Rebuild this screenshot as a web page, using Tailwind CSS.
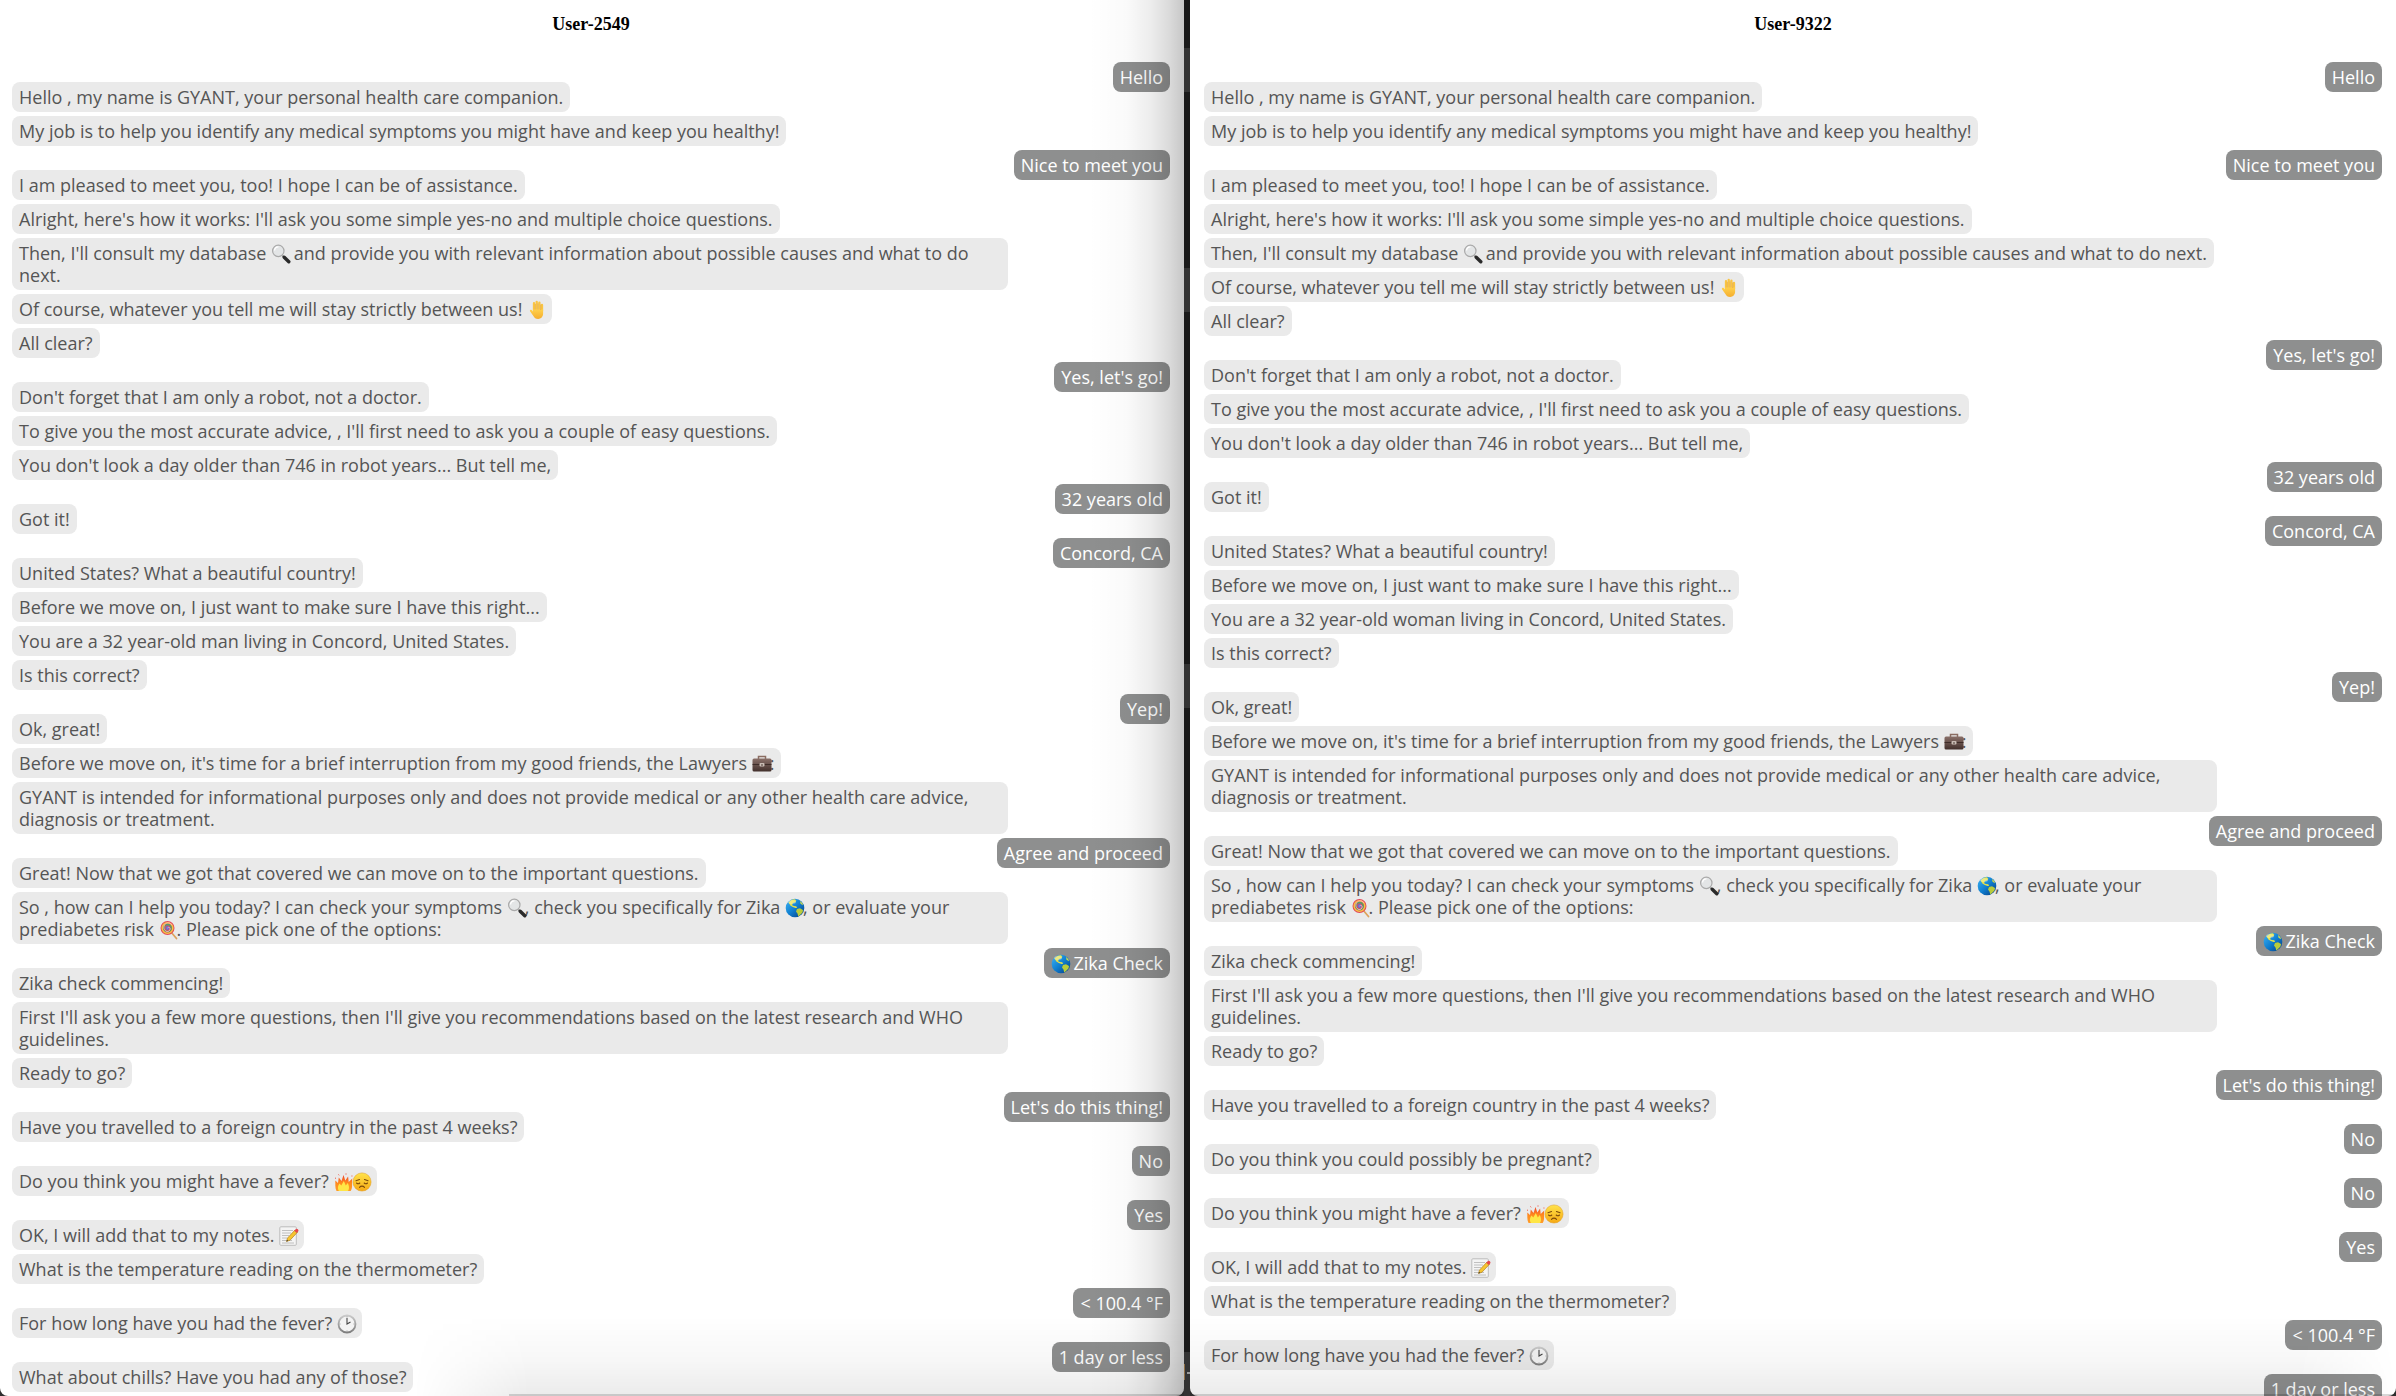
<!DOCTYPE html>
<html lang="en">
<head>
<meta charset="utf-8">
<title>GYANT conversations</title>
<script src="https://cdn.jsdelivr.net/npm/@tailwindcss/browser@4"></script>
</head>
<body class="bg-[#2e2e2e]">
<svg class="absolute size-0" aria-hidden="true">
  <defs>
    <linearGradient id="gGlobe" x1="0" y1="0" x2="1" y2="1"><stop offset="0" stop-color="#3fb4f5"/><stop offset=".5" stop-color="#0f7fd0"/><stop offset="1" stop-color="#063a80"/></linearGradient>
    <linearGradient id="gHand" x1="0" y1="0" x2="0" y2="1"><stop offset="0" stop-color="#ffd04c"/><stop offset="1" stop-color="#f5ae2e"/></linearGradient>
    <linearGradient id="gCase" x1="0" y1="0" x2="0" y2="1"><stop offset="0" stop-color="#8a7069"/><stop offset="1" stop-color="#42302c"/></linearGradient>
    <linearGradient id="gFire" x1="0" y1="0" x2="0" y2="1"><stop offset="0" stop-color="#f0452a"/><stop offset=".5" stop-color="#ff8a1e"/><stop offset="1" stop-color="#ff9d28"/></linearGradient>
    <linearGradient id="gFace" x1="0" y1="0" x2="0" y2="1"><stop offset="0" stop-color="#ffe34a"/><stop offset="1" stop-color="#f6a914"/></linearGradient>
    <linearGradient id="gClock" x1="0" y1="0" x2="0" y2="1"><stop offset="0" stop-color="#c9c9c9"/><stop offset="1" stop-color="#7f7f7f"/></linearGradient>
  </defs>
  <symbol id="lens" viewBox="0 0 20 20">
    <path d="M11.5 11.5l2.2 2.2" stroke="#777" stroke-width="1.6"/>
    <path d="M13.2 13.2l4.6 4.6" stroke="#2a2a2a" stroke-width="3.4" stroke-linecap="round"/>
    <circle cx="7.3" cy="6.9" r="5.7" fill="#e3e5e6" stroke="#a9a9a9" stroke-width="1.2"/>
    <path d="M3.5 6.5a4 4 0 0 1 4-3.6" fill="none" stroke="#fff" stroke-width="1.4"/>
  </symbol>
  <symbol id="hand" viewBox="0 0 20 20">
    <path d="M7 11V3.2M9.7 10V1.8M12.4 10V2.6M15 11V5" stroke="#f9c443" stroke-width="2.3" stroke-linecap="round"/>
    <path d="M5.9 9.5h10.2v4c0 3.2-2 5.4-5 5.4-2.400 0-3.700-1-4.700-3L3 11.200c-.6-1.300 1-2 1.900-1l1.300 1.600z" fill="url(#gHand)"/>
    <path d="M8.350 4v5.500M11.050 3.500v6M13.700 4.500v5.500" stroke="#dd9526" stroke-width=".5"/>
  </symbol>
  <symbol id="globe" viewBox="0 0 20 20">
    <circle cx="10" cy="10" r="9.300" fill="url(#gGlobe)"/>
    <path d="M3.500 4.500C5 2.300 7.500 1 10 1.200l1.300 1.500-1 1.700-2.400.6-.8 2.200 1.700.8 2.400.3 1 1.500-1.500.3-2.900-1.100-2.400-1.400z" fill="#e3e04c"/>
    <path d="M12 11l3-.7 3 1.600-.5 2.600-2.500 2.500-1.800 1.600-.6-2.800-1.600-2.200z" fill="#b9cc3b"/>
    <path d="M15 3l2.300 2 .7 2.300-2.500-1.500z" fill="#cfd94b"/>
    <ellipse cx="7" cy="4" rx="4" ry="2" fill="#fff" opacity=".3"/>
  </symbol>
  <symbol id="case" viewBox="0 0 20 20">
    <path d="M6.500 5V2.500h7V5" fill="none" stroke="#8b6d62" stroke-width="1.500"/>
    <rect x=".5" y="4.500" width="19" height="13" rx="1.500" fill="url(#gCase)"/>
    <path d="M.5 10.500h19" stroke="#33231f" stroke-width=".8"/>
    <rect x="7.500" y="9" width="5" height="3.500" rx="1" fill="#c9bdb5"/>
    <path d="M9 11h2" stroke="#4c3b35"/>
  </symbol>
  <symbol id="lolly" viewBox="0 0 20 20">
    <path d="M12 12l5.500 6.500" stroke="#dda35e" stroke-width="1.800" stroke-linecap="round"/>
    <circle cx="8.500" cy="8" r="7" fill="#e4475a"/>
    <circle cx="8.500" cy="8" r="5.300" fill="none" stroke="#f5c542" stroke-width="1.500"/>
    <circle cx="8.500" cy="8" r="3.600" fill="none" stroke="#4aa56a" stroke-width="1.500"/>
    <circle cx="8.500" cy="8" r="2" fill="#6a70d0"/>
    <path d="M8.500 8c2-2 4 1 1.500 3S4 9.500 5 6s6-4.500 8-1" fill="none" stroke="#ffb1b8" stroke-width=".9"/>
  </symbol>
  <symbol id="fire" viewBox="0 0 20 20">
    <path d="M2.500 19C.8 15.500 1.500 12 1.300 8.500L4 11l.8-5.500 2.700 3.600L9.500 3l1.800 5.500 2.800-4 .6 5.500 3.600-3.500c-1 4 1 8.500-1.600 12.500z" fill="url(#gFire)"/>
    <path d="M5 19c-2-3-.8-5.500.5-7.500l1.800 2L9.800 9l2 4.500 2-2.500c1.200 2.500 2 5.500.2 8z" fill="#ffe646"/>
    <path d="M1 6.200h.9M4.500 2.500l.6.800M12 1.500v1M17.500 4h.9" stroke="#ee4636" stroke-width="1"/>
  </symbol>
  <symbol id="sad" viewBox="0 0 20 20">
    <circle cx="10" cy="10" r="9.100" fill="url(#gFace)" stroke="#e09a1a" stroke-width=".5"/>
    <path d="M4 8.700l3.500-1.200M16 8.700l-3.500-1.200M4.500 11c1 .8 2.400.8 3.300 0M12.200 11c1 .8 2.400.8 3.300 0M7.500 15.300c1.400-1.600 3.600-1.600 5 0" fill="none" stroke="#7b4a0b" stroke-width="1.100" stroke-linecap="round"/>
  </symbol>
  <symbol id="memo" viewBox="0 0 20 20">
    <rect x=".8" y=".8" width="16.500" height="18.500" rx="1" fill="#f4f4f4" stroke="#bdbdbd"/>
    <path d="M3 4.500h11M3 7h9M3 9.500h7M3 12h5M3 14.500h10M3 17h12" stroke="#b3b3b3" stroke-width=".8"/>
    <path d="M7.500 15.500l1-3.500L16 4l2.500 2.200-7.500 8z" fill="#f6c530" stroke="#a87412" stroke-width=".6"/>
    <path d="M15.200 4.800L17 3c1-.8 3.200 1 2.300 2.300l-1.600 1.800z" fill="#e5484d"/>
    <path d="M7.500 15.500l.5-1.700 1.200 1.200z" fill="#333"/>
  </symbol>
  <symbol id="clock" viewBox="0 0 20 20">
    <circle cx="10" cy="10" r="8.500" fill="#f3f3f3" stroke="url(#gClock)" stroke-width="1.800"/>
    <path d="M10 4v6l3.500-2" fill="none" stroke="#444" stroke-width="1.100"/>
    <path d="M10 2.500v1M10 16.500v1M2.500 10h1M16.500 10h1" stroke="#888" stroke-width=".8"/>
  </symbol>
</svg>

<main class="grid h-screen grid-cols-[1184fr_6px_1206fr] overflow-hidden font-['Open_Sans',sans-serif] text-[18px] leading-[22px] text-[#555]">

  <section class="relative overflow-hidden rounded-b-lg bg-white pr-[14px] pl-3 [&_svg]:relative [&_svg]:-mr-[2px] [&_svg]:inline-block [&_svg]:size-5 [&_svg]:align-[-4px] [&>div]:flex [&>div]:h-5 [&>div]:justify-end [&>div>span]:h-[30px] [&>div>span]:rounded-lg [&>div>span]:bg-[#8e8f8f] [&>div>span]:px-[7px] [&>div>span]:py-1 [&>div>span]:text-white [&>p]:mb-1 [&>p]:w-fit [&>p]:max-w-[86%] [&>p]:rounded-lg [&>p]:bg-[#eaeaea] [&>p]:px-[7px] [&>p]:py-1">
    <h1 class="h-[62px] pt-[13px] text-center font-['Liberation_Serif',serif] font-bold text-black">User-2549</h1>
    <div><span>Hello</span></div>
    <p>Hello , my name is GYANT, your personal health care companion.</p>
    <p>My job is to help you identify any medical symptoms you might have and keep you healthy!</p>
    <div><span>Nice to meet you</span></div>
    <p>I am pleased to meet you, too! I hope I can be of assistance.</p>
    <p>Alright, here's how it works: I'll ask you some simple yes-no and multiple choice questions.</p>
    <p>Then, I'll consult my database <svg><use href="#lens"/></svg> and provide you with relevant information about possible causes and what to do next.</p>
    <p>Of course, whatever you tell me will stay strictly between us! <svg><use href="#hand"/></svg></p>
    <p>All clear?</p>
    <div><span>Yes, let's go!</span></div>
    <p>Don't forget that I am only a robot, not a doctor.</p>
    <p>To give you the most accurate advice, , I'll first need to ask you a couple of easy questions.</p>
    <p>You don't look a day older than 746 in robot years... But tell me,</p>
    <div><span>32 years old</span></div>
    <p>Got it!</p>
    <div><span>Concord, CA</span></div>
    <p>United States? What a beautiful country!</p>
    <p>Before we move on, I just want to make sure I have this right...</p>
    <p>You are a 32 year-old man living in Concord, United States.</p>
    <p>Is this correct?</p>
    <div><span>Yep!</span></div>
    <p>Ok, great!</p>
    <p>Before we move on, it's time for a brief interruption from my good friends, the Lawyers <svg><use href="#case"/></svg>:</p>
    <p>GYANT is intended for informational purposes only and does not provide medical or any other health care advice, diagnosis or treatment.</p>
    <div><span>Agree and proceed</span></div>
    <p>Great! Now that we got that covered we can move on to the important questions.</p>
    <p>So , how can I help you today? I can check your symptoms <svg><use href="#lens"/></svg>, check you specifically for Zika <svg><use href="#globe"/></svg>, or evaluate your prediabetes risk <svg><use href="#lolly"/></svg>. Please pick one of the options:</p>
    <div><span><svg><use href="#globe"/></svg> Zika Check</span></div>
    <p>Zika check commencing!</p>
    <p>First I'll ask you a few more questions, then I'll give you recommendations based on the latest research and WHO guidelines.</p>
    <p>Ready to go?</p>
    <div><span>Let's do this thing!</span></div>
    <p>Have you travelled to a foreign country in the past 4 weeks?</p>
    <div><span>No</span></div>
    <p>Do you think you might have a fever? <svg><use href="#fire"/></svg><svg><use href="#sad"/></svg></p>
    <div><span>Yes</span></div>
    <p>OK, I will add that to my notes. <svg><use href="#memo"/></svg></p>
    <p>What is the temperature reading on the thermometer?</p>
    <div><span>&lt; 100.4 °F</span></div>
    <p>For how long have you had the fever? <svg><use href="#clock"/></svg></p>
    <div><span>1 day or less</span></div>
    <p>What about chills? Have you had any of those?</p>
    <!-- shadow cast by the neighbouring window -->
    <i class="pointer-events-none absolute inset-y-0 right-0 w-24 bg-[linear-gradient(to_right,transparent,rgb(0_0_0/0.02)_40%,rgb(0_0_0/0.07)_65%,rgb(0_0_0/0.14)_84%,rgb(0_0_0/0.22))]"></i>
    <i class="pointer-events-none absolute right-0 bottom-0 left-[35%] h-20 bg-[linear-gradient(to_top,rgb(0_0_0/0.08),rgb(0_0_0/0.03)_45%,transparent)] mask-[linear-gradient(to_right,transparent,black_15%)]"></i>
    <i class="pointer-events-none absolute right-0 bottom-0 left-[43%] h-[2px] bg-black/15"></i>
  </section>

  <!-- strip of desktop between the two windows -->
  <aside class="flex flex-col bg-[#191919]" aria-hidden="true">
    <i class="mt-12 h-11 bg-[#333]"></i>
    <i class="mt-44 h-11 bg-[#333]"></i>
    <i class="mt-88 h-11 bg-[#333]"></i>
    <i class="mt-161 flex flex-1 items-start bg-[#333] pt-3"><b class="h-4 w-px bg-[#8f6f45]"></b><b class="mt-2 ml-[2px] h-[2px] w-[3px] bg-[#9a9a9a]"></b></i>
  </aside>

  <section class="relative overflow-hidden rounded-b-lg bg-white px-[14px] [&_svg]:relative [&_svg]:-mr-[2px] [&_svg]:inline-block [&_svg]:size-5 [&_svg]:align-[-4px] [&>div]:flex [&>div]:h-5 [&>div]:justify-end [&>div>span]:h-[30px] [&>div>span]:rounded-lg [&>div>span]:bg-[#8e8f8f] [&>div>span]:px-[7px] [&>div>span]:py-1 [&>div>span]:text-white [&>p]:mb-1 [&>p]:w-fit [&>p]:max-w-[86%] [&>p]:rounded-lg [&>p]:bg-[#eaeaea] [&>p]:px-[7px] [&>p]:py-1">
    <h1 class="h-[62px] pt-[13px] text-center font-['Liberation_Serif',serif] font-bold text-black">User-9322</h1>
    <div><span>Hello</span></div>
    <p>Hello , my name is GYANT, your personal health care companion.</p>
    <p>My job is to help you identify any medical symptoms you might have and keep you healthy!</p>
    <div><span>Nice to meet you</span></div>
    <p>I am pleased to meet you, too! I hope I can be of assistance.</p>
    <p>Alright, here's how it works: I'll ask you some simple yes-no and multiple choice questions.</p>
    <p>Then, I'll consult my database <svg><use href="#lens"/></svg> and provide you with relevant information about possible causes and what to do next.</p>
    <p>Of course, whatever you tell me will stay strictly between us! <svg><use href="#hand"/></svg></p>
    <p>All clear?</p>
    <div><span>Yes, let's go!</span></div>
    <p>Don't forget that I am only a robot, not a doctor.</p>
    <p>To give you the most accurate advice, , I'll first need to ask you a couple of easy questions.</p>
    <p>You don't look a day older than 746 in robot years... But tell me,</p>
    <div><span>32 years old</span></div>
    <p>Got it!</p>
    <div><span>Concord, CA</span></div>
    <p>United States? What a beautiful country!</p>
    <p>Before we move on, I just want to make sure I have this right...</p>
    <p>You are a 32 year-old woman living in Concord, United States.</p>
    <p>Is this correct?</p>
    <div><span>Yep!</span></div>
    <p>Ok, great!</p>
    <p>Before we move on, it's time for a brief interruption from my good friends, the Lawyers <svg><use href="#case"/></svg>:</p>
    <p>GYANT is intended for informational purposes only and does not provide medical or any other health care advice, diagnosis or treatment.</p>
    <div><span>Agree and proceed</span></div>
    <p>Great! Now that we got that covered we can move on to the important questions.</p>
    <p>So , how can I help you today? I can check your symptoms <svg><use href="#lens"/></svg>, check you specifically for Zika <svg><use href="#globe"/></svg>, or evaluate your prediabetes risk <svg><use href="#lolly"/></svg>. Please pick one of the options:</p>
    <div><span><svg><use href="#globe"/></svg> Zika Check</span></div>
    <p>Zika check commencing!</p>
    <p>First I'll ask you a few more questions, then I'll give you recommendations based on the latest research and WHO guidelines.</p>
    <p>Ready to go?</p>
    <div><span>Let's do this thing!</span></div>
    <p>Have you travelled to a foreign country in the past 4 weeks?</p>
    <div><span>No</span></div>
    <p>Do you think you could possibly be pregnant?</p>
    <div><span>No</span></div>
    <p>Do you think you might have a fever? <svg><use href="#fire"/></svg><svg><use href="#sad"/></svg></p>
    <div><span>Yes</span></div>
    <p>OK, I will add that to my notes. <svg><use href="#memo"/></svg></p>
    <p>What is the temperature reading on the thermometer?</p>
    <div><span>&lt; 100.4 °F</span></div>
    <p>For how long have you had the fever? <svg><use href="#clock"/></svg></p>
    <div><span>1 day or less</span></div>
    <i class="pointer-events-none absolute inset-x-0 bottom-0 h-20 bg-[linear-gradient(to_top,rgb(0_0_0/0.08),rgb(0_0_0/0.03)_45%,transparent)] mask-[linear-gradient(to_right,black_92%,transparent)]"></i>
    <i class="pointer-events-none absolute inset-x-0 bottom-0 h-[2px] bg-black/15"></i>
  </section>
</main>
</body>
</html>
